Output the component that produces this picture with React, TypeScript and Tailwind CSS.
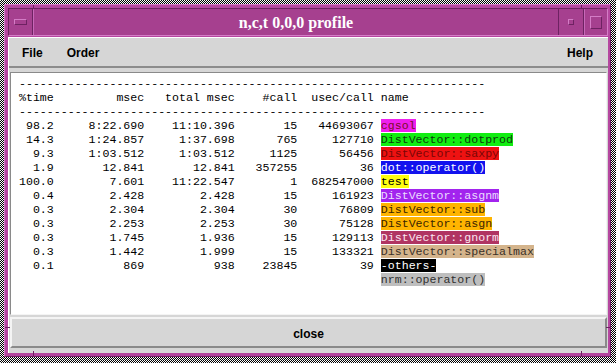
import React from "react";

type Row = {
  t: string;
  ms: string;
  tot: string;
  calls: string;
  usec: string;
  name: string;
  bg: string;
  fg: string;
};

const rows: Row[] = [
  { t: "98.2", ms: "8:22.690", tot: "11:10.396", calls: "15", usec: "44693067", name: "cgsol", bg: "bg-[#ee1fee]", fg: "text-[#7a0f2a]" },
  { t: "14.3", ms: "1:24.857", tot: "1:37.698", calls: "765", usec: "127710", name: "DistVector::dotprod", bg: "bg-[#12ee12]", fg: "text-[#0c3a0c]" },
  { t: "9.3", ms: "1:03.512", tot: "1:03.512", calls: "1125", usec: "56456", name: "DistVector::saxpy", bg: "bg-[#ee1212]", fg: "text-[#7a0606]" },
  { t: "1.9", ms: "12.841", tot: "12.841", calls: "357255", usec: "36", name: "dot::operator()", bg: "bg-[#1212ee]", fg: "text-white" },
  { t: "100.0", ms: "7.601", tot: "11:22.547", calls: "1", usec: "682547000", name: "test", bg: "bg-[#ffff10]", fg: "text-black" },
  { t: "0.4", ms: "2.428", tot: "2.428", calls: "15", usec: "161923", name: "DistVector::asgnm", bg: "bg-[#a224ee]", fg: "text-[#eadcff]" },
  { t: "0.3", ms: "2.304", tot: "2.304", calls: "30", usec: "76809", name: "DistVector::sub", bg: "bg-[#ffb400]", fg: "text-[#3a2400]" },
  { t: "0.3", ms: "2.253", tot: "2.253", calls: "30", usec: "75128", name: "DistVector::asgn", bg: "bg-[#ffb400]", fg: "text-[#3a2400]" },
  { t: "0.3", ms: "1.745", tot: "1.936", calls: "15", usec: "129113", name: "DistVector::gnorm", bg: "bg-[#b03462]", fg: "text-[#fbe6f0]" },
  { t: "0.3", ms: "1.442", tot: "1.999", calls: "15", usec: "133321", name: "DistVector::specialmax", bg: "bg-[#d4b48c]", fg: "text-[#3a3028]" },
  { t: "0.1", ms: "869", tot: "938", calls: "23845", usec: "39", name: "-others-", bg: "bg-black", fg: "text-white" },
];

const dashes = "-".repeat(67);

function pre(r: { t: string; ms: string; tot: string; calls: string; usec: string }) {
  return (
    r.t.padStart(5) +
    r.ms.padStart(13) +
    r.tot.padStart(13) +
    r.calls.padStart(9) +
    r.usec.padStart(11) +
    " "
  );
}

export default function App() {
  return (
    <div className="relative w-[616px] h-[363px] pt-[4px] pl-[4px] pr-[5px] pb-[6px] bg-[image:repeating-conic-gradient(#000_0%_25%,#fff_0%_50%)] bg-[length:2px_2px]">
      <div className="relative h-full flex flex-col bg-[#b5479f] border-t border-l border-[#d47cc6] border-r border-b border-r-[#6e2262] border-b-[#6e2262] pt-[3px] pl-[3px] pr-[2px] pb-[3px]">
        {/* resize notches */}
        <div className="absolute left-[28px] bottom-0 w-px h-[5px] bg-[#6e2262]" />
        <div className="absolute right-[28px] bottom-0 w-px h-[5px] bg-[#6e2262]" />
        <div className="absolute left-[28px] top-0 w-px h-[4px] bg-[#6e2262]" />
        <div className="absolute right-[28px] top-0 w-px h-[4px] bg-[#6e2262]" />
        <div className="absolute left-0 bottom-[28px] h-px w-[5px] bg-[#6e2262]" />
        <div className="absolute right-0 bottom-[28px] h-px w-[4px] bg-[#6e2262]" />

        {/* title bar */}
        <div className="flex h-[28px] border-t border-l border-[#6e2262] border-r border-b border-r-[#d47cc6] border-b-[#d47cc6] bg-[#a6408f]">
          <div className="w-[24px] flex items-center justify-center border-r border-[#6e2262]">
            <div className="w-[13px] h-[6px] border-t border-l border-[#d47cc6] border-r border-b border-r-[#6e2262] border-b-[#6e2262]" />
          </div>
          <div className="flex-1 flex items-center justify-center border-l border-[#c868b8] text-white text-[16px] font-bold leading-none font-['Liberation_Serif',serif] pt-[1px]">
            n,c,t 0,0,0 profile
          </div>
          <div className="w-[26px] flex items-center justify-center border-l border-[#6e2262] border-r border-r-[#6e2262]">
            <div className="w-[6px] h-[6px] border-t border-l border-[#d47cc6] border-r border-b border-r-[#6e2262] border-b-[#6e2262]" />
          </div>
          <div className="w-[23px] flex items-center justify-center border-l border-[#c868b8]">
            <div className="w-[12px] h-[13px] border-t border-l border-[#d47cc6] border-r border-b border-r-[#6e2262] border-b-[#6e2262]" />
          </div>
        </div>

        {/* client */}
        <div className="flex-1 flex flex-col bg-[#d6d6d6] mt-[1px] border-t border-l border-white">
          {/* menu bar */}
          <div className="h-[30px] flex items-center pl-[13px] pr-[15px] pt-[1px] border-b-2 border-[#8c8c8c] font-['Liberation_Sans',sans-serif] font-bold text-[12px] text-black">
            <span>File</span>
            <span className="ml-[24px]">Order</span>
            <span className="ml-auto">Help</span>
          </div>
          {/* text panel */}
          <div className="mt-[4px] mx-[1px] h-[243px] bg-white border-t border-l border-[#8a8a8a] border-r border-b border-r-[#f4f4f4] border-b-[#f4f4f4] pt-[4px] pl-[8px] overflow-hidden">
            <div className="whitespace-pre font-['Liberation_Mono',monospace] text-[11.6px] leading-[14px] text-black">
              <div>{dashes}</div>
              <div>{"%time" + "msec".padStart(13) + "total msec".padStart(13) + "#call".padStart(9) + "usec/call".padStart(11) + " name"}</div>
              <div>{dashes}</div>
              {rows.map((r, i) => (
                <div key={i}>
                  {pre(r)}
                  <span className={`${r.bg} ${r.fg}`}>{r.name}</span>
                </div>
              ))}
              <div>
                {" ".repeat(52)}
                <span className="bg-[#bebebe] text-[#303030]">nrm::operator()</span>
              </div>
            </div>
          </div>
          {/* close button */}
          <div className="mt-[2px] mx-[1px] h-[31px] flex items-center justify-center pt-[3px] bg-[#d6d6d6] border-t-2 border-l-2 border-[#f4f4f4] border-r-2 border-b-2 border-r-[#8a8a8a] border-b-[#8a8a8a] font-['Liberation_Sans',sans-serif] font-bold text-[12px] text-black">
            close
          </div>
          <div className="h-[4px]" />
        </div>
      </div>
    </div>
  );
}
